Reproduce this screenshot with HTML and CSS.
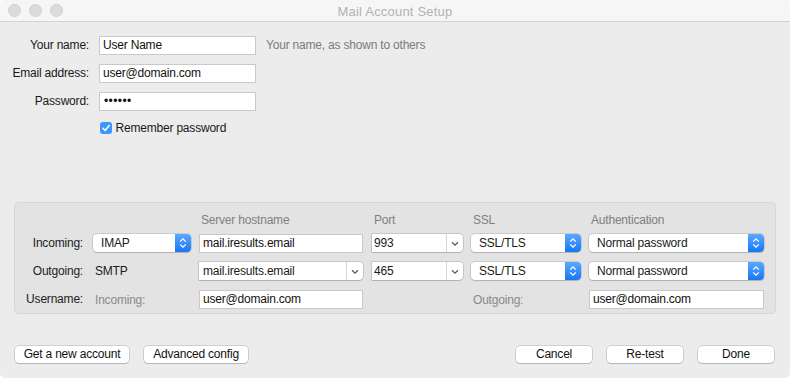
FILE: index.html
```html
<!DOCTYPE html>
<html lang="en">
<head>
  <meta charset="UTF-8" />
  <title>Mail Account Setup</title>
  <link rel="stylesheet" href="styles.css">
</head>
<body>
  <div class="window">
    <div class="titlebar">
      <div class="lights">
        <span class="light"></span>
        <span class="light"></span>
        <span class="light"></span>
      </div>
      <div class="title">Mail Account Setup</div>
    </div>

    <div class="content">
      <!-- Identity -->
      <div class="identity">
        <label class="lbl">Your name:</label>
        <div class="field">User Name</div>
        <div class="hint">Your name, as shown to others</div>

        <label class="lbl">Email address:</label>
        <div class="field">user@domain.com</div>
        <div></div>

        <label class="lbl">Password:</label>
        <div class="field dots">&#8226;&#8226;&#8226;&#8226;&#8226;&#8226;</div>
        <div></div>

        <div></div>
        <div class="remember">
          <span class="check">
            <svg width="12" height="12" viewBox="0 0 12 12"><path d="M3 6.3 L5.1 8.5 L9.2 3.6" fill="none" stroke="#fff" stroke-width="1.6" stroke-linecap="round" stroke-linejoin="round"/></svg>
          </span>
          Remember password
        </div>
        <div></div>
      </div>

      <!-- Server settings -->
      <div class="group">
        <div class="colhead"></div>
        <div class="colhead"></div>
        <div class="colhead">Server hostname</div>
        <div class="colhead port">Port</div>
        <div class="colhead">SSL</div>
        <div class="colhead">Authentication</div>

        <div class="rowlbl">Incoming:</div>
        <div class="popup"><span>IMAP</span><span class="stepper"><svg width="16" height="18" viewBox="0 0 16 18"><path d="M5.2 7.6 L8 4.9 L10.8 7.6 M5.2 10.4 L8 13.1 L10.8 10.4" fill="none" stroke="#fff" stroke-width="1.3"/></svg></span></div>
        <div class="field">mail.iresults.email</div>
        <div class="combo port"><span>993</span><span class="drop"><svg width="16" height="17" viewBox="0 0 16 17"><path d="M5 7.3 L8 10.2 L11 7.3" fill="none" stroke="#555" stroke-width="1.2"/></svg></span></div>
        <div class="popup"><span>SSL/TLS</span><span class="stepper"><svg width="16" height="18" viewBox="0 0 16 18"><path d="M5.2 7.6 L8 4.9 L10.8 7.6 M5.2 10.4 L8 13.1 L10.8 10.4" fill="none" stroke="#fff" stroke-width="1.3"/></svg></span></div>
        <div class="popup"><span>Normal password</span><span class="stepper"><svg width="16" height="18" viewBox="0 0 16 18"><path d="M5.2 7.6 L8 4.9 L10.8 7.6 M5.2 10.4 L8 13.1 L10.8 10.4" fill="none" stroke="#fff" stroke-width="1.3"/></svg></span></div>

        <div class="rowlbl">Outgoing:</div>
        <div class="plain">SMTP</div>
        <div class="combo"><span>mail.iresults.email</span><span class="drop"><svg width="16" height="17" viewBox="0 0 16 17"><path d="M5 7.3 L8 10.2 L11 7.3" fill="none" stroke="#555" stroke-width="1.2"/></svg></span></div>
        <div class="combo port"><span>465</span><span class="drop"><svg width="16" height="17" viewBox="0 0 16 17"><path d="M5 7.3 L8 10.2 L11 7.3" fill="none" stroke="#555" stroke-width="1.2"/></svg></span></div>
        <div class="popup"><span>SSL/TLS</span><span class="stepper"><svg width="16" height="18" viewBox="0 0 16 18"><path d="M5.2 7.6 L8 4.9 L10.8 7.6 M5.2 10.4 L8 13.1 L10.8 10.4" fill="none" stroke="#fff" stroke-width="1.3"/></svg></span></div>
        <div class="popup"><span>Normal password</span><span class="stepper"><svg width="16" height="18" viewBox="0 0 16 18"><path d="M5.2 7.6 L8 4.9 L10.8 7.6 M5.2 10.4 L8 13.1 L10.8 10.4" fill="none" stroke="#fff" stroke-width="1.3"/></svg></span></div>

        <div class="rowlbl">Username:</div>
        <div class="sub">Incoming:</div>
        <div class="field">user@domain.com</div>
        <div></div>
        <div class="sub">Outgoing:</div>
        <div class="field">user@domain.com</div>
      </div>

      <!-- Buttons -->
      <div class="actions">
        <div class="btn-group">
          <button class="btn wide">Get a new account</button>
          <button class="btn mid">Advanced config</button>
        </div>
        <div class="btn-group">
          <button class="btn fixed">Cancel</button>
          <button class="btn fixed">Re-test</button>
          <button class="btn fixed">Done</button>
        </div>
      </div>
    </div>
  </div>
</body>
</html>
```

FILE: styles.css
```css
body {
  margin: 0;
  background: #ffffff;
  font-family: "Liberation Sans", Arial, sans-serif;
  font-size: 12px;
  letter-spacing: -0.2px;
  color: #1a1a1a;
}

.window {
  width: 790px;
  height: 378px;
  background: #ececec;
  border-radius: 5px;
  overflow: hidden;
}

/* Title bar */
.titlebar {
  height: 21px;
  background: #f6f6f6;
  border-bottom: 1px solid #d3d3d3;
  display: flex;
  align-items: center;
  position: relative;
}

.lights {
  display: flex;
  gap: 8px;
  padding-left: 8px;
}

.light {
  width: 11px;
  height: 11px;
  border-radius: 50%;
  background: #dcdcdc;
  border: 0.5px solid #d0d0d0;
}

.title {
  position: absolute;
  left: 0;
  right: 0;
  top: 1px;
  text-align: center;
  font-size: 13px;
  letter-spacing: 0.2px;
  color: #b2b2b2;
  line-height: 21px;
}

.content {
  padding-top: 14px;
}

/* Identity form */
.identity {
  display: grid;
  grid-template-columns: 89px 157px auto;
  grid-template-rows: 19px 19px 19px 15px;
  column-gap: 10px;
  row-gap: 9px;
}

.lbl {
  text-align: right;
  line-height: 19px;
}

.field {
  background: #fff;
  border: 1px solid #c9c9c9;
  box-sizing: border-box;
  height: 19px;
  line-height: 17px;
  padding-left: 3px;
  color: #111;
  white-space: nowrap;
}

.dots {
  font-size: 12px;
  letter-spacing: 0.4px;
  padding-left: 4px;
}

.hint {
  color: #7b7b7b;
  line-height: 19px;
}

.remember {
  display: flex;
  align-items: center;
  gap: 4px;
  margin-left: 0.5px;
}

.check {
  width: 12px;
  height: 12px;
  border-radius: 3px;
  background: #3c97fb;
  display: flex;
}

/* Server settings group */
.group {
  margin: 67px 14px 0 14px;
  background: #e3e3e3;
  border: 1px solid #d8d8d8;
  border-radius: 4px;
  padding: 9px 0 5px 0;
  display: grid;
  grid-template-columns: 70px 98px 164px 92px 110px 175px;
  grid-template-rows: 12px 18px 18px 18px;
  column-gap: 8px;
  row-gap: 10px;
}

.colhead {
  color: #808080;
  line-height: 16px;
  height: 16px;
  padding-left: 2px;
}

.colhead.port {
  padding-left: 3px;
}

.rowlbl {
  text-align: right;
  padding-right: 2px;
  line-height: 18px;
  color: #222;
}

.plain {
  line-height: 18px;
  padding-left: 2px;
}

.sub {
  color: #8a8a8a;
  line-height: 20px;
  padding-left: 2px;
}

.group .field {
  height: 19px;
}

.popup {
  background: #fff;
  border-radius: 4px;
  box-shadow: 0 0 0 0.5px rgba(0, 0, 0, 0.22), 0 1px 1px rgba(0, 0, 0, 0.12);
  display: flex;
  justify-content: space-between;
  align-items: center;
  height: 18px;
  padding-left: 8px;
  white-space: nowrap;
  overflow: hidden;
}

.stepper {
  width: 16px;
  height: 18px;
  background: linear-gradient(#5aa8ff, #1a76f7);
  display: flex;
}

.combo {
  background: #fff;
  border-radius: 0 4px 4px 0;
  box-shadow: 0 0 0 0.5px rgba(0, 0, 0, 0.25), 0 1px 1px rgba(0, 0, 0, 0.1);
  display: flex;
  justify-content: space-between;
  align-items: center;
  height: 18px;
  padding-left: 4px;
  white-space: nowrap;
  overflow: hidden;
}

.combo.port {
  margin-left: 1px;
  padding-left: 2px;
}

.drop {
  width: 16px;
  height: 18px;
  border-left: 1px solid #d6d6d6;
  display: flex;
  align-items: center;
}

/* Bottom buttons */
.actions {
  display: flex;
  justify-content: space-between;
  padding: 0 16px 0 15px;
  margin-top: 32px;
}

.btn-group {
  display: flex;
  gap: 15px;
}

.btn {
  font-family: "Liberation Sans", Arial, sans-serif;
  font-size: 12px;
  letter-spacing: -0.2px;
  color: #111;
  background: #fff;
  border: none;
  border-radius: 4px;
  box-shadow: 0 0 0 0.5px rgba(0, 0, 0, 0.25), 0 1px 1px rgba(0, 0, 0, 0.12);
  height: 17px;
  padding: 0;
  line-height: 17px;
  white-space: nowrap;
}

.btn.wide {
  width: 114px;
}

.btn.mid {
  width: 104px;
}

.btn.fixed {
  width: 76px;
}
```
